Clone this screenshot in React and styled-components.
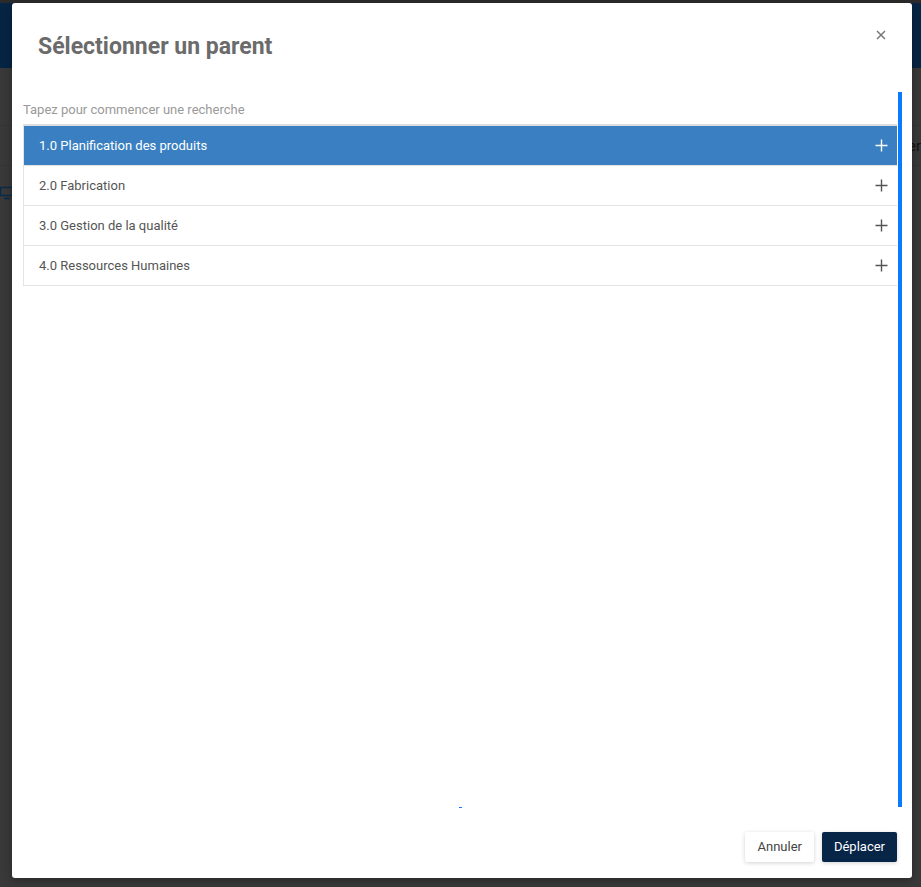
import React from "react";
import styled, { createGlobalStyle } from "styled-components";

const Global = createGlobalStyle`
  html, body { margin: 0; padding: 0; }
  body { font-family: Roboto, "Liberation Sans", Arial, sans-serif; background: #3a3a3a; }
  * { box-sizing: border-box; }
`;

const Page = styled.div`
  position: relative;
  width: 921px;
  height: 887px;
  overflow: hidden;
  background: #393939;
  display: flex;
  flex-direction: column;
`;

const TopStrip = styled.div`
  height: 3px;
  background: #2b2b2b;
`;

const Header = styled.div`
  height: 65px;
  background: #062544;
`;

const PageBody = styled.div`
  flex: 1;
  display: flex;
  flex-direction: column;
  padding-top: 57px;
`;

const PageRow = styled.div`
  height: 40px;
  border-top: 1px solid #343434;
  display: flex;
  align-items: ${(p) => p.$align || "center"};
  padding-top: ${(p) => p.$pt || 0}px;
  justify-content: space-between;
  color: #111;
  font-size: 15px;
`;

const Backdrop = styled.div`
  position: absolute;
  inset: 0;
  display: flex;
  padding: 3px 9px 9px 12px;
`;

const Modal = styled.div`
  width: 900px;
  height: 875px;
  background: #fff;
  border-radius: 3px;
  display: flex;
  flex-direction: column;
  box-shadow: 0 2px 10px rgba(0, 0, 0, 0.3);
`;

const ModalHeader = styled.div`
  height: 86px;
  display: flex;
  align-items: flex-start;
  justify-content: space-between;
  padding: 29px 24px 0 26px;
`;

const Title = styled.h2`
  margin: 0;
  font-size: 23px;
  font-weight: 700;
  color: #6b6b6b;
  line-height: 30px;
`;

const Close = styled.button`
  border: none;
  background: none;
  padding: 0;
  margin-top: -4px;
  width: 14px;
  height: 14px;
  display: flex;
  align-items: center;
  justify-content: center;
  cursor: pointer;
`;

const Body = styled.div`
  flex: 1;
  display: flex;
  flex-direction: column;
  padding: 4px 10px 0 11px;
`;

const ScrollArea = styled.div`
  height: 715px;
  border-right: 4px solid #0a7bff;
  display: flex;
  flex-direction: column;
  position: relative;
`;

const Search = styled.input`
  border: none;
  outline: none;
  height: 32px;
  padding: 3px 0 0 0;
  font-family: inherit;
  font-size: 13px;
  color: #555;
  width: 874px;
  background: transparent;
  &::placeholder { color: #9a9a9a; }
`;

const List = styled.div`
  width: 874px;
  border-top: 2px solid #dedede;
  border-left: 1px solid #e4e4e4;
  display: flex;
  flex-direction: column;
`;

const Row = styled.div`
  height: 40px;
  display: flex;
  align-items: center;
  justify-content: space-between;
  padding: 0 9px 0 15px;
  border-bottom: 1px solid #e4e4e4;
  background: ${(p) => (p.$active ? "#3a7fc1" : "#fff")};
  color: ${(p) => (p.$active ? "#fff" : "#555")};
  font-size: 13px;
`;

const Dash = styled.div`
  position: absolute;
  left: 436px;
  bottom: -1px;
  width: 3px;
  height: 1px;
  background: #0a7bff;
`;

const Footer = styled.div`
  height: 72px;
  display: flex;
  justify-content: flex-end;
  align-items: flex-start;
  gap: 8px;
  padding: 25px 15px 0 0;
`;

const Button = styled.button`
  height: 30px;
  padding: 0 12px;
  border: none;
  border-radius: 2px;
  font-family: inherit;
  font-size: 13px;
  background: ${(p) => (p.$primary ? "#062547" : "#fff")};
  color: ${(p) => (p.$primary ? "#fff" : "#444")};
  box-shadow: 0 1px 4px rgba(0, 0, 0, 0.18);
  cursor: pointer;
`;

const Plus = ({ color }) => (
  <svg width="13" height="13" viewBox="0 0 13 13">
    <path d="M6.5 0.5v12M0.5 6.5h12" stroke={color} strokeWidth="1.4" />
  </svg>
);

const items = [
  "1.0 Planification des produits",
  "2.0 Fabrication",
  "3.0 Gestion de la qualité",
  "4.0 Ressources Humaines",
];

export default function App() {
  return (
    <Page>
      <Global />
      <TopStrip />
      <Header />
      <PageBody>
        <PageRow>
          <span />
          <span>er</span>
        </PageRow>
        <PageRow $align="flex-start" $pt={20}>
          <svg width="14" height="14" viewBox="0 0 14 14">
            <rect x="0.5" y="1.5" width="12" height="8" fill="none" stroke="#0b2a4a" strokeWidth="1.5" />
            <path d="M4 12.5h6" stroke="#0b2a4a" strokeWidth="1.5" />
          </svg>
          <span />
        </PageRow>
      </PageBody>
      <Backdrop>
        <Modal>
          <ModalHeader>
            <Title>Sélectionner un parent</Title>
            <Close aria-label="Fermer">
              <svg width="10" height="10" viewBox="0 0 10 10">
                <path d="M1 1l8 8M9 1l-8 8" stroke="#777" strokeWidth="1.5" />
              </svg>
            </Close>
          </ModalHeader>
          <Body>
            <ScrollArea>
              <Search placeholder="Tapez pour commencer une recherche" />
              <List>
                {items.map((t, i) => (
                  <Row key={t} $active={i === 0}>
                    <span>{t}</span>
                    <Plus color={i === 0 ? "#fff" : "#555"} />
                  </Row>
                ))}
              </List>
              <Dash />
            </ScrollArea>
          </Body>
          <Footer>
            <Button>Annuler</Button>
            <Button $primary>Déplacer</Button>
          </Footer>
        </Modal>
      </Backdrop>
    </Page>
  );
}
